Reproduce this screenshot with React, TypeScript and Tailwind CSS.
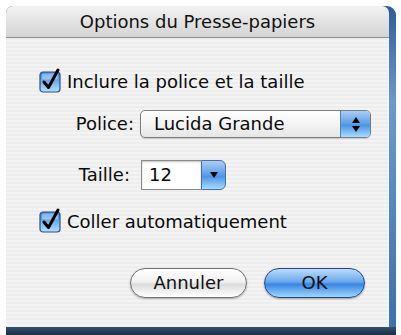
import React from "react";

const font = { fontFamily: '"Lucida Grande", "DejaVu Sans", sans-serif' };

function Check() {
  return (
    <svg width="22" height="22" viewBox="0 0 22 22" className="overflow-visible shrink-0">
      <defs>
        <linearGradient id="cb" x1="0" y1="0" x2="0" y2="1">
          <stop offset="0" stopColor="#3c86d6" />
          <stop offset="0.5" stopColor="#6fb0ee" />
          <stop offset="1" stopColor="#b9e0ff" />
        </linearGradient>
      </defs>
      <rect x="1" y="1" width="20" height="20" rx="3" fill="url(#cb)" stroke="#2a4f80" strokeWidth="1.2" />
      <rect x="3" y="2.5" width="16" height="6" rx="2" fill="#ffffff" opacity="0.35" />
      <path d="M5 11 L9.5 16.5 L19 -1" fill="none" stroke="#000" strokeWidth="3" strokeLinecap="round" strokeLinejoin="round" />
    </svg>
  );
}

export default function App() {
  return (
    <div className="w-[401px] h-[335px] bg-white flex flex-col overflow-hidden" style={font}>
      <div className="h-[6px] shrink-0" />
      <div className="flex flex-1 min-h-0">
        <div className="w-[6px] shrink-0" />
        <div className="flex flex-1 bg-[linear-gradient(180deg,#2f5c9a,#6a9ad0_30%,#3e6fae)] rounded-tr-[9px] rounded-tl-[7px] pr-[7px]">
          <div className="flex-1 flex flex-col rounded-t-[7px] overflow-hidden">
            <div className="h-[32px] shrink-0 flex items-center justify-center bg-[linear-gradient(180deg,#f2f2f2,#d4d4d4)] border-b border-[#8e8e8e] text-[18px] text-[#111]">
              Options du Presse-papiers
            </div>
            <div className="flex-1 flex flex-col bg-[repeating-linear-gradient(180deg,#ededed_0px,#ededed_2px,#f3f3f3_2px,#f3f3f3_4px)] border-r border-[#fafafa] pl-[33px] pt-[33px] text-[18px] text-[#0a0a0a]">
              <div className="flex items-center h-[22px]">
                <Check />
                <span className="ml-[6px] leading-none">Inclure la police et la taille</span>
              </div>
              <div className="flex items-center mt-[17px] h-[28px]">
                <span className="w-[95px] text-right leading-none">Police:</span>
                <div className="ml-[6px] w-[231px] h-[28px] flex rounded-[5px] border border-[#7d7d7d] bg-[linear-gradient(180deg,#ffffff,#f4f4f4_50%,#e6e6e6)] shadow-[0_1px_1px_rgba(0,0,0,0.15)] overflow-hidden">
                  <div className="flex-1 flex items-center pl-[13px] leading-none">Lucida Grande</div>
                  <div className="w-[30px] flex flex-col items-center justify-center gap-[3px] border-l border-[#5b7fae] bg-[linear-gradient(180deg,#a8d0f7,#5c9de6_50%,#4b94e6_55%,#a6dcff)]">
                    <div className="w-0 h-0 border-l-[4px] border-r-[4px] border-b-[6px] border-l-transparent border-r-transparent border-b-black" />
                    <div className="w-0 h-0 border-l-[4px] border-r-[4px] border-t-[6px] border-l-transparent border-r-transparent border-t-black" />
                  </div>
                </div>
              </div>
              <div className="flex items-center mt-[22px] h-[30px]">
                <span className="w-[91px] text-right leading-none">Taille:</span>
                <div className="ml-[11px] flex h-[30px]">
                  <div className="w-[60px] h-[30px] flex items-center pl-[7px] bg-white border border-[#8a8a8a] border-r-0 leading-none shadow-[inset_0_1px_2px_rgba(0,0,0,0.25)]">12</div>
                  <div className="w-[25px] h-[30px] flex items-center justify-center rounded-r-[6px] border border-[#4a6e9e] bg-[linear-gradient(180deg,#a8d0f7,#5c9de6_50%,#4b94e6_55%,#a6dcff)]">
                    <div className="w-0 h-0 border-l-[4px] border-r-[4px] border-t-[6px] border-l-transparent border-r-transparent border-t-black" />
                  </div>
                </div>
              </div>
              <div className="flex items-center mt-[21px] h-[22px]">
                <Check />
                <span className="ml-[6px] leading-none">Coller automatiquement</span>
              </div>
              <div className="flex mt-[35px] pl-[91px]">
                <button className="w-[117px] h-[30px] rounded-full border border-[#6f6f6f] bg-[linear-gradient(180deg,#ffffff,#f2f2f2_45%,#dcdcdc_55%,#ffffff)] shadow-[0_1px_2px_rgba(0,0,0,0.3)] text-[18px] leading-none text-[#111]">
                  Annuler
                </button>
                <button className="ml-[17px] w-[101px] h-[30px] rounded-full border border-[#1d4a8c] bg-[linear-gradient(180deg,#bcdcfb,#6aa9ec_45%,#3b86e2_55%,#9cd8ff)] shadow-[0_1px_2px_rgba(0,0,0,0.35)] text-[18px] leading-none text-[#111]">
                  OK
                </button>
              </div>
            </div>
          </div>
        </div>
        <div className="w-[5px] shrink-0" />
      </div>
      <div className="h-[8px] shrink-0 ml-[6px] mr-[5px] bg-[linear-gradient(180deg,#34506e,#1a2c42)]" />
    </div>
  );
}
